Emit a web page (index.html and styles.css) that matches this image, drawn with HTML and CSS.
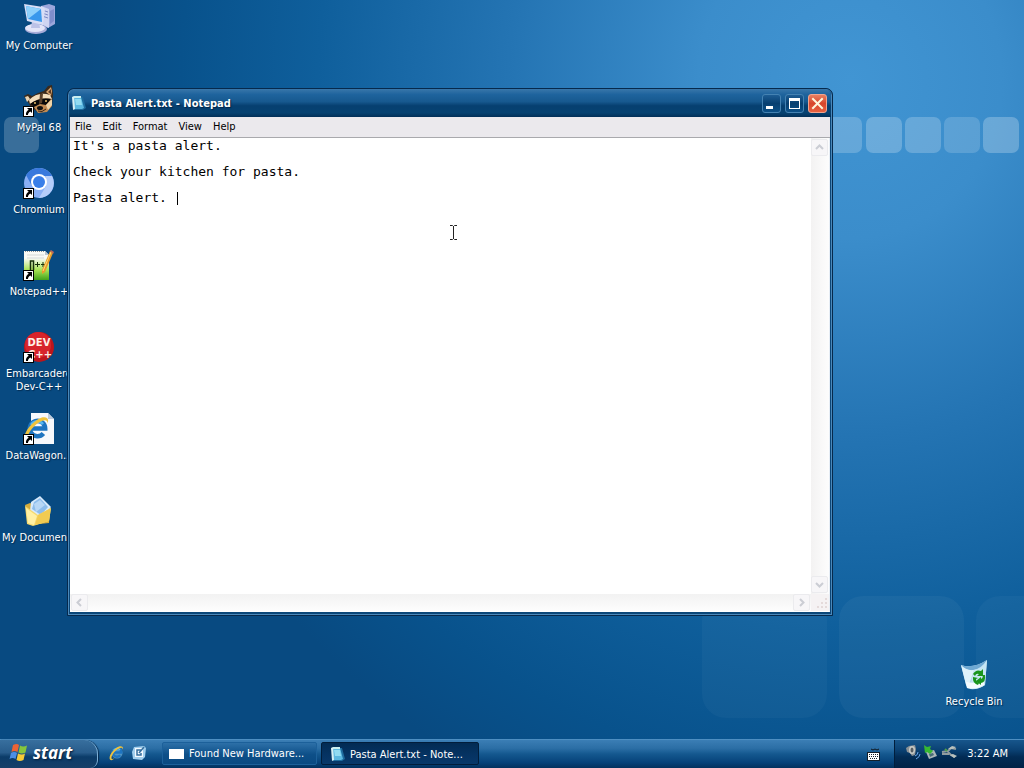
FILE: index.html
```html
<!DOCTYPE html>
<html lang="en">
<head>
  <meta charset="UTF-8">
  <meta name="viewport" content="width=device-width, initial-scale=1">
  <title>Pasta Alert.txt - Notepad</title>
  <link rel="stylesheet" href="styles.css">
</head>
<body>
  <!-- shared symbols -->
  <svg class="symbols" aria-hidden="true">
    <symbol id="shortcut" viewBox="0 0 11 11">
      <rect width="11" height="11" fill="#000"/>
      <rect x="1" y="1" width="9" height="9" fill="#fff"/>
      <path d="M4 2h5v5L7.400 5.400C5.500 6.600 5 7.500 5 9H3C2.600 6.800 3.700 5 5.700 3.800z" fill="#000"/>
    </symbol>
    <symbol id="notepad" viewBox="0 0 16 16">
      <path d="M3 2h9l3 11-3 2H3z" fill="#1e6c9e"/>
      <path d="M2 2h8l3 11-2 1H3z" fill="#5cb8e0"/>
      <path d="M1 2l2-1 1 13-2 1z" fill="#d8f0f4"/>
      <path d="M3 1h7v2H3z" fill="#c8eef0"/>
      <path d="M4 4h6l1 6H5z" fill="#92dcf2"/>
    </symbol>
    <symbol id="ie" viewBox="0 0 32 32">
      <path d="M22.500 20.500A8.500 8.500 0 1 1 24.500 15H10" fill="none" stroke="#1e74c0" stroke-width="5"/>
      <path d="M9 11a8 8 0 0 1 13-1" fill="none" stroke="#58b6ee" stroke-width="3"/>
      <path d="M2 29C-2 23 9 7 20 3c7-2 9 2 7 6 0-4-3-4-7-2C12 11 4 21 5 27c1 2 4 1 6-1-3 4-7 6-9 3z" fill="#efc33d"/>
    </symbol>
  </svg>

  <main class="desktop">
    <svg class="wallpaper" viewBox="0 0 1024 768" preserveAspectRatio="none" aria-hidden="true">
      <defs>
        <radialGradient id="sky" gradientUnits="userSpaceOnUse" cx="0" cy="0" r="1" gradientTransform="translate(850 80) scale(760 790)">
          <stop offset="0" stop-color="#4195d3"/>
          <stop offset=".2" stop-color="#3b8dcb"/>
          <stop offset=".45" stop-color="#2474b3"/>
          <stop offset=".7" stop-color="#0f5f9c"/>
          <stop offset=".88" stop-color="#08528c"/>
          <stop offset="1" stop-color="#084a81"/>
        </radialGradient>
      </defs>
      <rect width="1024" height="768" fill="url(#sky)"/>
      <g fill="#fff">
        <rect x="4" y="117" width="35" height="36" rx="7" fill-opacity=".2"/>
        <rect x="826" y="117" width="36" height="36" rx="7" fill-opacity=".2"/>
        <rect x="866" y="117" width="36" height="36" rx="7" fill-opacity=".23"/>
        <rect x="905" y="117" width="36" height="36" rx="7" fill-opacity=".21"/>
        <rect x="944" y="117" width="36" height="36" rx="7" fill-opacity=".16"/>
        <rect x="983" y="117" width="36" height="36" rx="7" fill-opacity=".24"/>
        <rect x="702" y="596" width="125" height="122" rx="24" fill-opacity=".03"/>
        <rect x="839" y="596" width="125" height="122" rx="24" fill-opacity=".04"/>
        <rect x="976" y="596" width="125" height="122" rx="24" fill-opacity=".03"/>
      </g>
    </svg>

    <nav class="icons" aria-label="Desktop">
      <a class="icon" href="#">
        <svg viewBox="0 0 32 32">
          <path d="M18 3l8-2 6 2v18l-7 4-8-4z" fill="#9ba6db"/>
          <path d="M18 3l8 3v19l-8-4z" fill="#cfd5f2"/>
          <path d="M19 7l6 2M19 10l6 2M19 13l6 2" stroke="#7c89c5" stroke-width="1"/>
          <path d="M27 8l4-2v12l-4 3z" fill="#7f8dcb"/>
          <ellipse cx="13" cy="26" rx="11" ry="5" fill="#a7acd9"/>
          <ellipse cx="12" cy="25" rx="10" ry="4" fill="#e3e5f8"/>
          <path d="M9 18h7l1 7H8z" fill="#bcc2e7"/>
          <path d="M1 1l19 3 2 2-2 16-16-4z" fill="#d8def6"/>
          <path d="M3 3l15 3 1 13-14-3z" fill="#3998ec"/>
          <path d="M3 3l15 3-13 10z" fill="#8dd0fb"/>
        </svg>
        <span>My Computer</span>
      </a>
      <a class="icon" href="#">
        <svg viewBox="0 0 32 32">
          <path d="M1 11l4-2 4 2 6-3 6-2 4-5 4-1 1 9-1 12-5 5-8 2-8-6z" fill="#3b2a1b"/>
          <path d="M23 7l5-5 1 4-1 5z" fill="#d9a56f"/>
          <path d="M25 7l3-3v5z" fill="#5b3922"/>
          <path d="M2 12l3-1 2 3-3 3z" fill="#e9d3b1"/>
          <path d="M6 15q9-9 21-5l2 4q-12-3-22 5z" fill="#f4dfbd"/>
          <path d="M7 19q8-6 21-5l-4 7-8 3z" fill="#090909"/>
          <path d="M17 9l3 0-1 9-3 1z" fill="#5b422c"/>
          <circle cx="12" cy="18" r="1" fill="#e6bb67"/>
          <circle cx="23" cy="16" r="1" fill="#e6bb67"/>
          <path d="M11 22l6-3 6 1 5-6 1 7-5 6-9 1z" fill="#c08a52"/>
          <path d="M23 20l6-6v6l-4 5z" fill="#efd4a8"/>
          <ellipse cx="17" cy="23" rx="3" ry="2" fill="#111"/>
          <path d="M15 26q4 2 8-2" fill="none" stroke="#38271a"/>
          <use href="#shortcut" x="0" y="21" width="11" height="11"/>
        </svg>
        <span>MyPal 68</span>
      </a>
      <a class="icon" href="#">
        <svg viewBox="0 0 32 32">
          <circle cx="16" cy="16" r="15" fill="#89aff5"/>
          <path d="M3 8A15 15 0 0 1 29 9H16L9 19z" fill="#3979dd"/>
          <path d="M29 9a15 15 0 0 1-13 22l7-12V9z" fill="#b5cdfa"/>
          <circle cx="16" cy="15" r="8" fill="#fff"/>
          <circle cx="16" cy="15" r="6" fill="#397ee8"/>
          <use href="#shortcut" x="0" y="21" width="11" height="11"/>
        </svg>
        <span>Chromium</span>
      </a>
      <a class="icon" href="#">
        <svg viewBox="0 0 32 32">
          <defs>
            <linearGradient id="npp" x2="0" y2="1">
              <stop offset=".25" stop-color="#fafbf6"/>
              <stop offset=".65" stop-color="#a9e455"/>
              <stop offset="1" stop-color="#42a21b"/>
            </linearGradient>
          </defs>
          <path d="M1 2h21l4 4v25H1z" fill="url(#npp)"/>
          <path d="M2 2.500h19" stroke="#8d9394" stroke-dasharray="1 1"/>
          <path d="M4 6h17M4 9h17" stroke="#d5dad8"/>
          <path d="M22 2v4h4z" fill="#bac6ce"/>
          <path d="M7.500 21V12h3v9" fill="none" stroke="#17310a" stroke-width="1.500"/>
          <path d="M12 15.500h5M14.500 13v5M18 15.500h4M20 13v5" stroke="#17310a"/>
          <path d="M27 2l3 2-8 19-3 2 0-4z" fill="#e89b2b"/>
          <path d="M28 3L20 22" stroke="#ffdc72"/>
          <path d="M27 2l1-1 3 2-1 2z" fill="#bb675b"/>
          <use href="#shortcut" x="0" y="21" width="11" height="11"/>
        </svg>
        <span>Notepad++</span>
      </a>
      <a class="icon" href="#">
        <svg viewBox="0 0 32 32">
          <circle cx="16" cy="16" r="15" fill="#bd151b"/>
          <circle cx="15" cy="14" r="13" fill="#d7242b"/>
          <text class="dev-text" x="16" y="15" text-anchor="middle">DEV</text>
          <text class="dev-text" x="17" y="27" text-anchor="middle">C++</text>
          <use href="#shortcut" x="0" y="21" width="11" height="11"/>
        </svg>
        <span>Embarcadero Dev-C++</span>
      </a>
      <a class="icon" href="#">
        <svg viewBox="0 0 32 32">
          <path d="M8 0h17l6 6v25H8z" fill="#f6f8fc"/>
          <path d="M25 0v6h6z" fill="#bdcbdc"/>
          <use href="#ie" x="0" y="2" width="29" height="29"/>
          <use href="#shortcut" x="0" y="21" width="11" height="11"/>
        </svg>
        <span>DataWagon...</span>
      </a>
      <a class="icon" href="#">
        <svg viewBox="0 0 32 32">
          <path d="M2 10l5-2 4 2 16 3-1 15-19 2z" fill="#d5ac3b"/>
          <path d="M8 7l9-6 11 11-9 12-12-8z" fill="#d8eafb"/>
          <path d="M11 7l6-4 8 9-7 8-9-6z" fill="#8dbdec"/>
          <path d="M11 9l6-4 5 5-9 7z" fill="#b7d7f6"/>
          <path d="M2 11l13 9 13-7-2 13-16 5-6-2z" fill="#f6d96e"/>
          <path d="M3 13l11 8-3 9-6-2z" fill="#fff0a4"/>
          <path d="M15 20l13-7-2 13-14 4z" fill="#f1cb52"/>
        </svg>
        <span>My Documents</span>
      </a>
    </nav>

    <section class="window">
      <header class="titlebar">
        <svg class="small-icon"><use href="#notepad"/></svg>
        <h1>Pasta Alert.txt - Notepad</h1>
        <button class="win-btn" aria-label="Minimize">
          <svg viewBox="0 0 17 17"><path d="M3 11h7v3H3z" fill="#fff"/></svg>
        </button>
        <button class="win-btn" aria-label="Maximize">
          <svg viewBox="0 0 17 17"><path d="M3 3h11v11H3zM4 6v7h9V6z" fill="#fff" fill-rule="evenodd"/></svg>
        </button>
        <button class="win-btn close" aria-label="Close">
          <svg viewBox="0 0 17 17"><path d="M4 4l9 9M13 4l-9 9" stroke="#fff6dc" stroke-width="2" stroke-linecap="square"/></svg>
        </button>
      </header>
      <div class="menubar">
        <button>File</button>
        <button>Edit</button>
        <button>Format</button>
        <button>View</button>
        <button>Help</button>
      </div>
      <div class="editor">
        <div class="page">
          <textarea aria-label="Document" spellcheck="false" wrap="off">It's a pasta alert.

Check your kitchen for pasta.

Pasta alert. </textarea>
          <span class="caret"></span>
          <svg class="pointer" viewBox="0 0 9 17"><path d="M1 1.500h2.500l1 1 1-1H8M4.500 2v13M1 15.500h2.500l1-1 1 1H8" fill="none" stroke="#222"/></svg>
        </div>
        <div class="scroll vertical">
          <button aria-label="Scroll up"><svg viewBox="0 0 9 9"><path d="M1 6l3.500-3.500L8 6"/></svg></button>
          <button aria-label="Scroll down"><svg viewBox="0 0 9 9"><path d="M1 3l3.500 3.500L8 3"/></svg></button>
        </div>
        <div class="scroll horizontal">
          <button aria-label="Scroll left"><svg viewBox="0 0 9 9"><path d="M6 1L2.500 4.500 6 8"/></svg></button>
          <button aria-label="Scroll right"><svg viewBox="0 0 9 9"><path d="M3 1l3.500 3.500L3 8"/></svg></button>
        </div>
        <svg class="grip" viewBox="0 0 18 17"><path d="M14 4h2v2h-2zM14 8h2v2h-2zM14 12h2v2h-2zM10 8h2v2h-2zM10 12h2v2h-2zM6 12h2v2H6z" fill="#e4dada"/></svg>
      </div>
    </section>

    <a class="icon recycle" href="#">
      <svg viewBox="0 0 32 32">
        <path d="M3 6q12 4 26-5l-2 25q-8 6-18 3z" fill="#b6d9ee"/>
        <path d="M3 6q12 4 26-5-6 9-14 10T3 6z" fill="#6fa9d3"/>
        <path d="M3 6q5 6 13 5l-6 17-2-2z" fill="#def2fb"/>
        <path d="M16 11q8-1 13-10l-2 25q-7 5-15 4z" fill="#c6e6f4"/>
        <path d="M8 23l8 1 10-3v5q-8 5-17 3z" fill="#f4fbff"/>
        <path d="M15 15q3-5 8-3l2-2v7h-6l2-2q-3-1-4 2zM27 16q1 7-4 8v2l-5-4 5-4v2q2-1 2-4zM15 18l5 1-2 1q0 3 3 4l-1 2q-5-2-5-6z" fill="#19951d"/>
      </svg>
      <span>Recycle Bin</span>
    </a>
  </main>

  <footer class="taskbar">
    <button class="start">
      <svg viewBox="0 0 20 18">
        <path d="M4 1q4-2 6 0L8.500 8q-3-2-6 0z" fill="#ec6335"/>
        <path d="M11 1.500q3 2 7 0L16.500 8.500q-4 2-7 0z" fill="#86c53c"/>
        <path d="M2 9q3-2 6 0l-1.500 6q-3-2-6 0z" fill="#4c8fe5"/>
        <path d="M9 9.500q4 2 7 0L14.500 16q-4 2-7 0z" fill="#f6ca36"/>
      </svg>
      start
    </button>
    <div class="quick">
      <a href="#" aria-label="Internet Explorer"><svg viewBox="0 0 32 32"><circle cx="16" cy="16" r="11" fill="#8ed3f8" opacity=".5"/><use href="#ie"/></svg></a>
      <a href="#" aria-label="Show Desktop">
        <svg viewBox="0 0 16 16">
          <path d="M3 2l10-1 2 2-1 9-3 3-9-1-1-7z" fill="#a2cfee"/>
          <path d="M4 3h8v9H4z" fill="#f5faff"/>
          <path d="M10 5H6v5h4V8M8 8l5-6" fill="none" stroke="#356f9f" stroke-width="1.500"/>
        </svg>
      </a>
    </div>
    <div class="tasks">
      <button class="task">
        <svg class="small-icon" viewBox="0 0 16 16"><path d="M0 3h15v10H0z" fill="#fff"/></svg>
        <span>Found New Hardware...</span>
      </button>
      <button class="task active">
        <svg class="small-icon"><use href="#notepad"/></svg>
        <span>Pasta Alert.txt - Note...</span>
      </button>
    </div>
    <button class="keyboard" aria-label="Keyboard">
      <svg viewBox="0 0 14 14">
        <path d="M4 1l2 1 2-1 2 1 2-1" fill="none" stroke="#101820"/>
        <path d="M0 4h13v9H0z" fill="#15202a"/>
        <path d="M1 5h11v7H1z" fill="#fff"/>
        <path d="M2 6.500h9M2 8.500h9M3 10.500h7" stroke="#15202a" stroke-dasharray="1 1"/>
      </svg>
    </button>
    <div class="tray">
      <svg viewBox="0 0 16 16">
        <path d="M1 3l3-2 6-1 1 4-1 6-3 1-2-3-3-1z" fill="#8a9196"/>
        <ellipse cx="7" cy="5" rx="3" ry="4" fill="#c8cac6"/>
        <ellipse cx="7" cy="5" rx="1.500" ry="2.500" fill="#565d63"/>
        <path d="M10 11q3-1 3-4M11 14q4-2 4-5" fill="none" stroke="#6aa6ec"/>
      </svg>
      <svg viewBox="0 0 16 16">
        <path d="M3 7l8-2 3 6-8 3z" fill="#abb5b8"/>
        <path d="M6 9l4-1 1 2-4 2z" fill="#486c77"/>
        <path d="M1 0l3 2 4-1-1 3 3 2-3 3-3-2-2 1z" fill="#37b832"/>
      </svg>
      <svg viewBox="0 0 16 16">
        <path d="M1 7l6-1 3-3 5 1M7 7l3 3 4 2M1 9h7" fill="none" stroke="#929c9f" stroke-width="2"/>
        <path d="M7 4l4-3 4 1-3 2zM9 10l3-1 4 2-3 2z" fill="#b9c0bd"/>
        <path d="M4 4l2 2" stroke="#4f9c4b" stroke-width="2"/>
      </svg>
      <time>3:22 AM</time>
    </div>
  </footer>
</body>
</html>
```
FILE: styles.css
```css
* { box-sizing: border-box; }
body {
  margin: 0;
  height: 100vh;
  display: flex;
  flex-direction: column;
  overflow: hidden;
  background: #084a81;
  color: #fff;
  font: 11px/13px "DejaVu Sans Condensed", "DejaVu Sans", sans-serif;
}
button {
  padding: 0;
  border: 0;
  background: none;
  color: inherit;
  font: inherit;
}
a { color: inherit; text-decoration: none; }
svg { display: block; flex: none; }
.symbols { position: absolute; width: 0; height: 0; }

/* desktop */
.desktop {
  position: relative;
  flex: 1;
  min-height: 0;
}
.wallpaper {
  position: absolute;
  top: 0;
  left: 0;
  width: 100vw;
  height: 100vh;
}
.icons {
  position: relative;
  display: grid;
  grid-auto-rows: 82px;
  width: 78px;
}
.icon {
  display: flex;
  flex-direction: column;
  align-items: center;
  gap: 4px;
  padding-top: 3px;
  text-align: center;
  text-shadow: 1px 1px 1px #022a50;
}
.icon svg { width: 32px; height: 32px; }
.recycle {
  position: absolute;
  right: 12px;
  bottom: 31px;
  width: 76px;
}
.dev-text {
  font: bold 10px "DejaVu Sans", sans-serif;
  fill: #fff0e6;
  text-shadow: none;
}

/* notepad window */
.window {
  position: absolute;
  top: 88px;
  left: 67px;
  right: 191px;
  bottom: 123px;
  display: flex;
  flex-direction: column;
  padding: 0 2px 3px;
  border: 1px solid #06294c;
  border-radius: 7px 7px 0 0;
  background: #0b4779;
  box-shadow: inset 1px 1px 0 #4b88b9, inset -1px -1px 0 #4b88b9;
}
.titlebar {
  display: flex;
  align-items: center;
  gap: 4px;
  height: 28px;
  margin: 0 -1px;
  padding: 0 4px 0 2px;
  border-radius: 6px 6px 0 0;
  background: linear-gradient(#3977aa 0, #1e639d 20%, #17598f 45%, #063f70 60%, #064271 85%, #022f58);
}
.titlebar h1 {
  flex: 1;
  margin: 0;
  font-size: 11px;
  text-shadow: 1px 1px 1px #02264a;
}
.small-icon { width: 16px; height: 16px; }
.win-btn {
  width: 19px;
  height: 19px;
  border: 1px solid #4482b2;
  border-radius: 3px;
  background: linear-gradient(#1d5d94, #073f70 50%, #0b5087);
}
.win-btn svg { width: 17px; height: 17px; }
.win-btn.close {
  border-color: #f0a48f;
  background: linear-gradient(#e78062, #d8462b 50%, #e76140);
}
.menubar {
  display: flex;
  gap: 11px;
  height: 21px;
  padding: 0 5px 2px;
  border-bottom: 1px solid #a9a9ad;
  background: #ebe9ed;
  color: #000;
}
.editor {
  flex: 1;
  min-height: 0;
  display: grid;
  grid-template: 1fr 17px / 1fr 18px;
  border-right: 1px solid #e6edf5;
  border-bottom: 1px solid #fff;
  background: #fff;
}
.page { position: relative; }
textarea {
  display: block;
  width: 100%;
  height: 100%;
  padding: 1px 3px;
  border: 0;
  outline: 0;
  resize: none;
  overflow: hidden;
  background: #fff;
  color: #000;
  font: 13px/13px "DejaVu Sans Mono", monospace;
}
.caret {
  position: absolute;
  top: 54px;
  left: 107px;
  width: 1px;
  height: 13px;
  background: #000;
}
.pointer {
  position: absolute;
  top: 86px;
  left: 379px;
  width: 9px;
  height: 17px;
}
.scroll {
  display: flex;
  justify-content: space-between;
}
.vertical {
  flex-direction: column;
  padding: 1px 0;
  background: linear-gradient(90deg, #f3f2f2, #fdfdfd);
}
.horizontal {
  padding: 0 1px;
  background: linear-gradient(#f2f2f2, #fdfdfd);
}
.scroll button {
  display: grid;
  place-items: center;
  width: 17px;
  height: 17px;
  border: 1px solid #ebebee;
  border-radius: 2px;
  background: #f7f6f8;
}
.scroll svg { width: 9px; height: 9px; }
.scroll path { fill: none; stroke: #cbcdd4; stroke-width: 2; }
.grip { width: 18px; height: 17px; background: #f5f2f3; }

/* taskbar */
.taskbar {
  position: relative;
  display: flex;
  height: 29px;
  border-top: 1px solid #4e8fc2;
  background: linear-gradient(#3b7eb5, #2b6ea5 30%, #14588f 50%, #06427a 80%, #02315e);
}
.start {
  display: flex;
  align-items: center;
  gap: 4px;
  width: 98px;
  padding: 0 0 2px 9px;
  border-right: 1px solid #7eafd5;
  border-radius: 0 14px 8px 0;
  background: linear-gradient(#386f9e, #285c8b 45%, #0b3c69 60%, #173f68);
  box-shadow: 1px 0 1px #052b50;
  font: italic bold 17px/20px "Open Sans", sans-serif;
  text-shadow: 1px 1px 2px #021c38;
}
.start svg { width: 20px; height: 18px; }
.quick {
  display: flex;
  align-items: center;
  gap: 6px;
  width: 64px;
  padding: 0 0 2px 11px;
}
.quick svg { width: 16px; height: 16px; }
.tasks {
  flex: 1;
  display: flex;
  gap: 4px;
  min-width: 0;
  padding: 2px 0 3px;
}
.task {
  display: flex;
  align-items: center;
  gap: 4px;
  flex: 0 1 155px;
  min-width: 0;
  padding: 0 6px;
  border: 1px solid #1c609a;
  border-radius: 2px;
  background: linear-gradient(#2d70a8, #0d4f88 55%, #0a4a82);
  white-space: nowrap;
}
.task.active {
  flex-basis: 158px;
  padding: 1px 8px 0;
  border-color: #011d3b;
  background: linear-gradient(#022b53, #053261 50%, #08386a);
}
.keyboard { width: 42px; padding: 2px 14px 0 15px; }
.keyboard svg { width: 14px; height: 14px; }
.tray {
  display: flex;
  align-items: center;
  gap: 2px;
  padding: 0 16px 2px 10px;
  border-left: 1px solid #011e3c;
  background: linear-gradient(#17568c, #0b4274 35%, #022c55 60%, #012246);
}
.tray svg { width: 16px; height: 16px; }
.tray time { margin-left: 8px; }
```
